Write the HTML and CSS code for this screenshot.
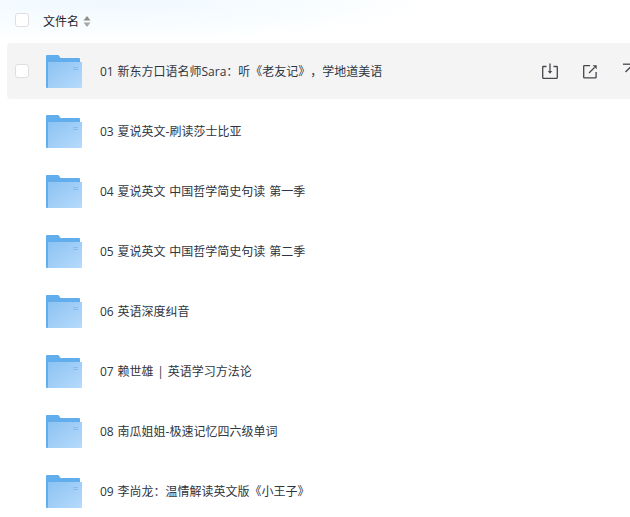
FILE: index.html
```html
<!DOCTYPE html>
<html lang="zh">
<head>
<meta charset="utf-8">
<title>文件列表</title>
<link rel="stylesheet" href="styles.css">
</head>
<body>
<svg class="defs" width="0" height="0" aria-hidden="true">
  <defs>
    <linearGradient id="fg" x1="0" y1="0" x2="1" y2="1">
      <stop offset="0" stop-color="#8cc3f3"/>
      <stop offset="1" stop-color="#b6dafb"/>
    </linearGradient>
    <symbol id="folder" viewBox="0 0 36 33">
      <path d="M0 1a1 1 0 0 1 1-1h11.500l2 3H33a1 1 0 0 1 1 1V10H36V20H34V33H1a1 1 0 0 1-1-1z" fill="#62aeed"/>
      <path d="M2 7h34v25a1 1 0 0 1-1 1H2z" fill="url(#fg)"/>
      <path d="M27 12.500h5M27 14.500h5" stroke="#86bbec" stroke-width="1" fill="none"/>
    </symbol>
  </defs>
</svg>
<main class="list">
  <header class="head">
    <span class="check"></span>
    <span class="head-name">文件名</span>
    <svg class="sort" width="8" height="11" viewBox="0 0 8 11"><path d="M4 0l3.500 4.500H.5z" fill="#8c8c8c"/><path d="M4 11L.5 6.500h7z" fill="#a6a6a6"/></svg>
  </header>
  <div class="row row-active">
    <span class="check"></span>
    <svg class="folder"><use href="#folder"/></svg>
    <span class="name">01 新东方口语名师Sara：听《老友记》，学地道美语</span>
    <div class="actions">
      <svg class="act" width="16" height="16" viewBox="0 0 16 16" fill="none" stroke="#45474d" stroke-width="1.300"><path d="M4.500 3.500H1.200a.5.500 0 0 0-.5.500v10.800c0 .3.200.5.500.5h13.600c.3 0 .5-.2.500-.5V4a.5.500 0 0 0-.5-.5h-3.300"/><path d="M8 .5v8.500"/><path d="M5.800 8L8 10.700 10.200 8z" fill="#45474d" stroke="none"/></svg>
      <svg class="act" width="15" height="15" viewBox="0 0 15 15" fill="none" stroke="#45474d" stroke-width="1.300"><path d="M7 1.700H1.300a.6.600 0 0 0-.6.600v11c0 .3.300.6.600.6h11.200c.3 0 .6-.3.600-.6V8"/><path d="M6 9l5.500-5.500"/><path d="M9.700 1.300h4v4z" fill="#45474d" stroke="none"/></svg>
      <svg class="act" width="16" height="16" viewBox="0 0 16 16" fill="none" stroke="#45474d" stroke-width="1.300"><path d="M0 1.200h16"/><path d="M8 3.500V15"/><path d="M2.500 9L8 3.500 13.500 9"/></svg>
    </div>
  </div>
  <div class="row"><svg class="folder"><use href="#folder"/></svg><span class="name">03 夏说英文-刷读莎士比亚</span></div>
  <div class="row"><svg class="folder"><use href="#folder"/></svg><span class="name">04 夏说英文 中国哲学简史句读 第一季</span></div>
  <div class="row"><svg class="folder"><use href="#folder"/></svg><span class="name">05 夏说英文 中国哲学简史句读 第二季</span></div>
  <div class="row"><svg class="folder"><use href="#folder"/></svg><span class="name">06 英语深度纠音</span></div>
  <div class="row"><svg class="folder"><use href="#folder"/></svg><span class="name">07 赖世雄 | 英语学习方法论</span></div>
  <div class="row"><svg class="folder"><use href="#folder"/></svg><span class="name">08 南瓜姐姐-极速记忆四六级单词</span></div>
  <div class="row"><svg class="folder"><use href="#folder"/></svg><span class="name">09 李尚龙：温情解读英文版《小王子》</span></div>
</main>
</body>
</html>
```
FILE: styles.css
```css
html, body {
  margin: 0;
  padding: 0;
  width: 630px;
  height: 517px;
  overflow: hidden;
}
body {
  background:
    radial-gradient(ellipse 330px 42px at 110px 0, #eff9ff 0, #f7fcff 55%, #ffffff 100%),
    #ffffff;
  font-family: "Open Sans", "Noto Sans CJK SC", sans-serif;
  font-size: 12px;
  color: #2e3440;
  text-spacing-trim: space-all;
}
.defs { position: absolute; }
.list { padding-left: 7px; width: 633px; }
.head {
  display: flex;
  align-items: center;
  height: 40px;
  margin-bottom: 3px;
  padding-left: 8px;
  color: #25262b;
}
.check {
  flex: none;
  width: 12px;
  height: 12px;
  border: 1px solid #dfdfe1;
  border-radius: 3px;
  background: #fff;
}
.head-name { margin-left: 14px; margin-top: 2px; }
.sort { margin-left: 4px; margin-top: 2px; }
.row {
  display: flex;
  align-items: center;
  height: 56px;
  margin-bottom: 4px;
  padding-left: 39px;
}
.row-active {
  background: #f4f4f5;
  padding: 0 1px 0 8px;
  border-radius: 4px 0 0 4px;
}
.row-active .folder { margin-left: 17px; }
.folder { flex: none; width: 36px; height: 33px; }
.name {
  margin-left: 18px;
  word-spacing: 0.7px;
  white-space: nowrap;
}
.actions {
  display: flex;
  align-items: center;
  gap: 25px;
  margin-left: auto;
}
.act { flex: none; }
```
